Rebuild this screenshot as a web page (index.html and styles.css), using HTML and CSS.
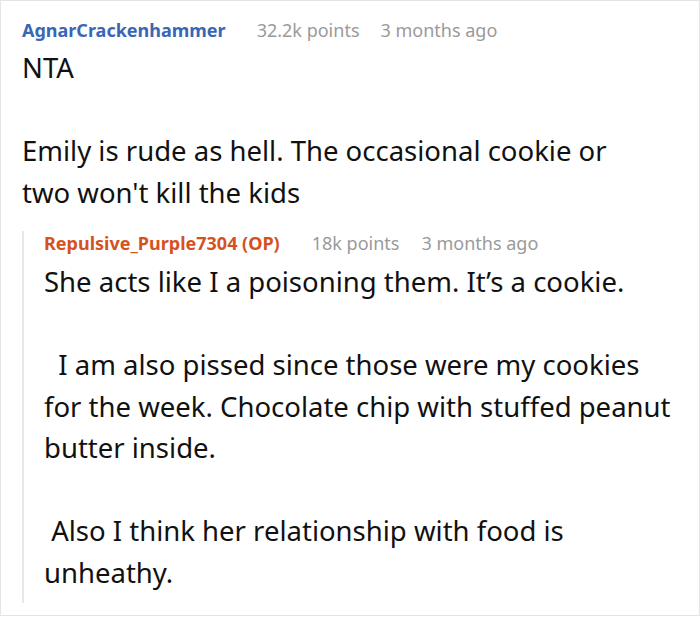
FILE: index.html
```html
<!DOCTYPE html>
<html>
<head>
<meta charset="utf-8">
<link rel="stylesheet" href="styles.css">
</head>
<body>
<div class="thread">
  <div class="comment">
    <div class="meta">
      <span class="author">AgnarCrackenhammer</span>
      <span class="points">32.2k points</span>
      <span class="time">3 months ago</span>
    </div>
    <div class="text top">NTA

Emily is rude as hell. The occasional cookie or two won't kill the kids</div>
    <div class="reply">
      <div class="meta">
        <span class="author op">Repulsive_Purple7304 (OP)</span>
        <span class="points">18k points</span>
        <span class="time">3 months ago</span>
      </div>
      <div class="text">She acts like I a poisoning them. It’s a cookie.

  I am also pissed since those were my cookies for the week. Chocolate chip with stuffed peanut butter inside.

 Also I think her relationship with food is unheathy.</div>
    </div>
  </div>
</div>
</body>
</html>
```

FILE: styles.css
```css
html, body {
  margin: 0;
  padding: 0;
  background: #fff;
}
body {
  font-family: "Noto Sans", "Open Sans", sans-serif;
  color: #1a1a1a;
}
.thread {
  width: 700px;
  height: 616px;
  box-sizing: border-box;
  border: 1px solid #e4e4e4;
  overflow: hidden;
}
.comment {
  padding: 17px 15px 0 21px;
}
.meta {
  display: flex;
  gap: 31px;
  font-size: 18px;
  line-height: 24px;
  color: #9a9a9a;
}
.meta .points + .time {
  margin-left: -10px;
}
.author {
  font-weight: 700;
  color: #3a66b6;
}
.author.op {
  color: #d4521e;
}
.text {
  white-space: pre-wrap;
  font-size: 27.5px;
  line-height: 41.5px;
  margin-top: 5px;
  color: #111;
}
.text.top {
  padding-right: 30px;
}
.reply {
  margin-top: 18px;
  border-left: 2px solid #e8e8e8;
  padding-left: 20px;
  padding-bottom: 10px;
}
.reply .meta {
  gap: 32px;
}
.reply .text {
  margin-top: 6px;
}
```
